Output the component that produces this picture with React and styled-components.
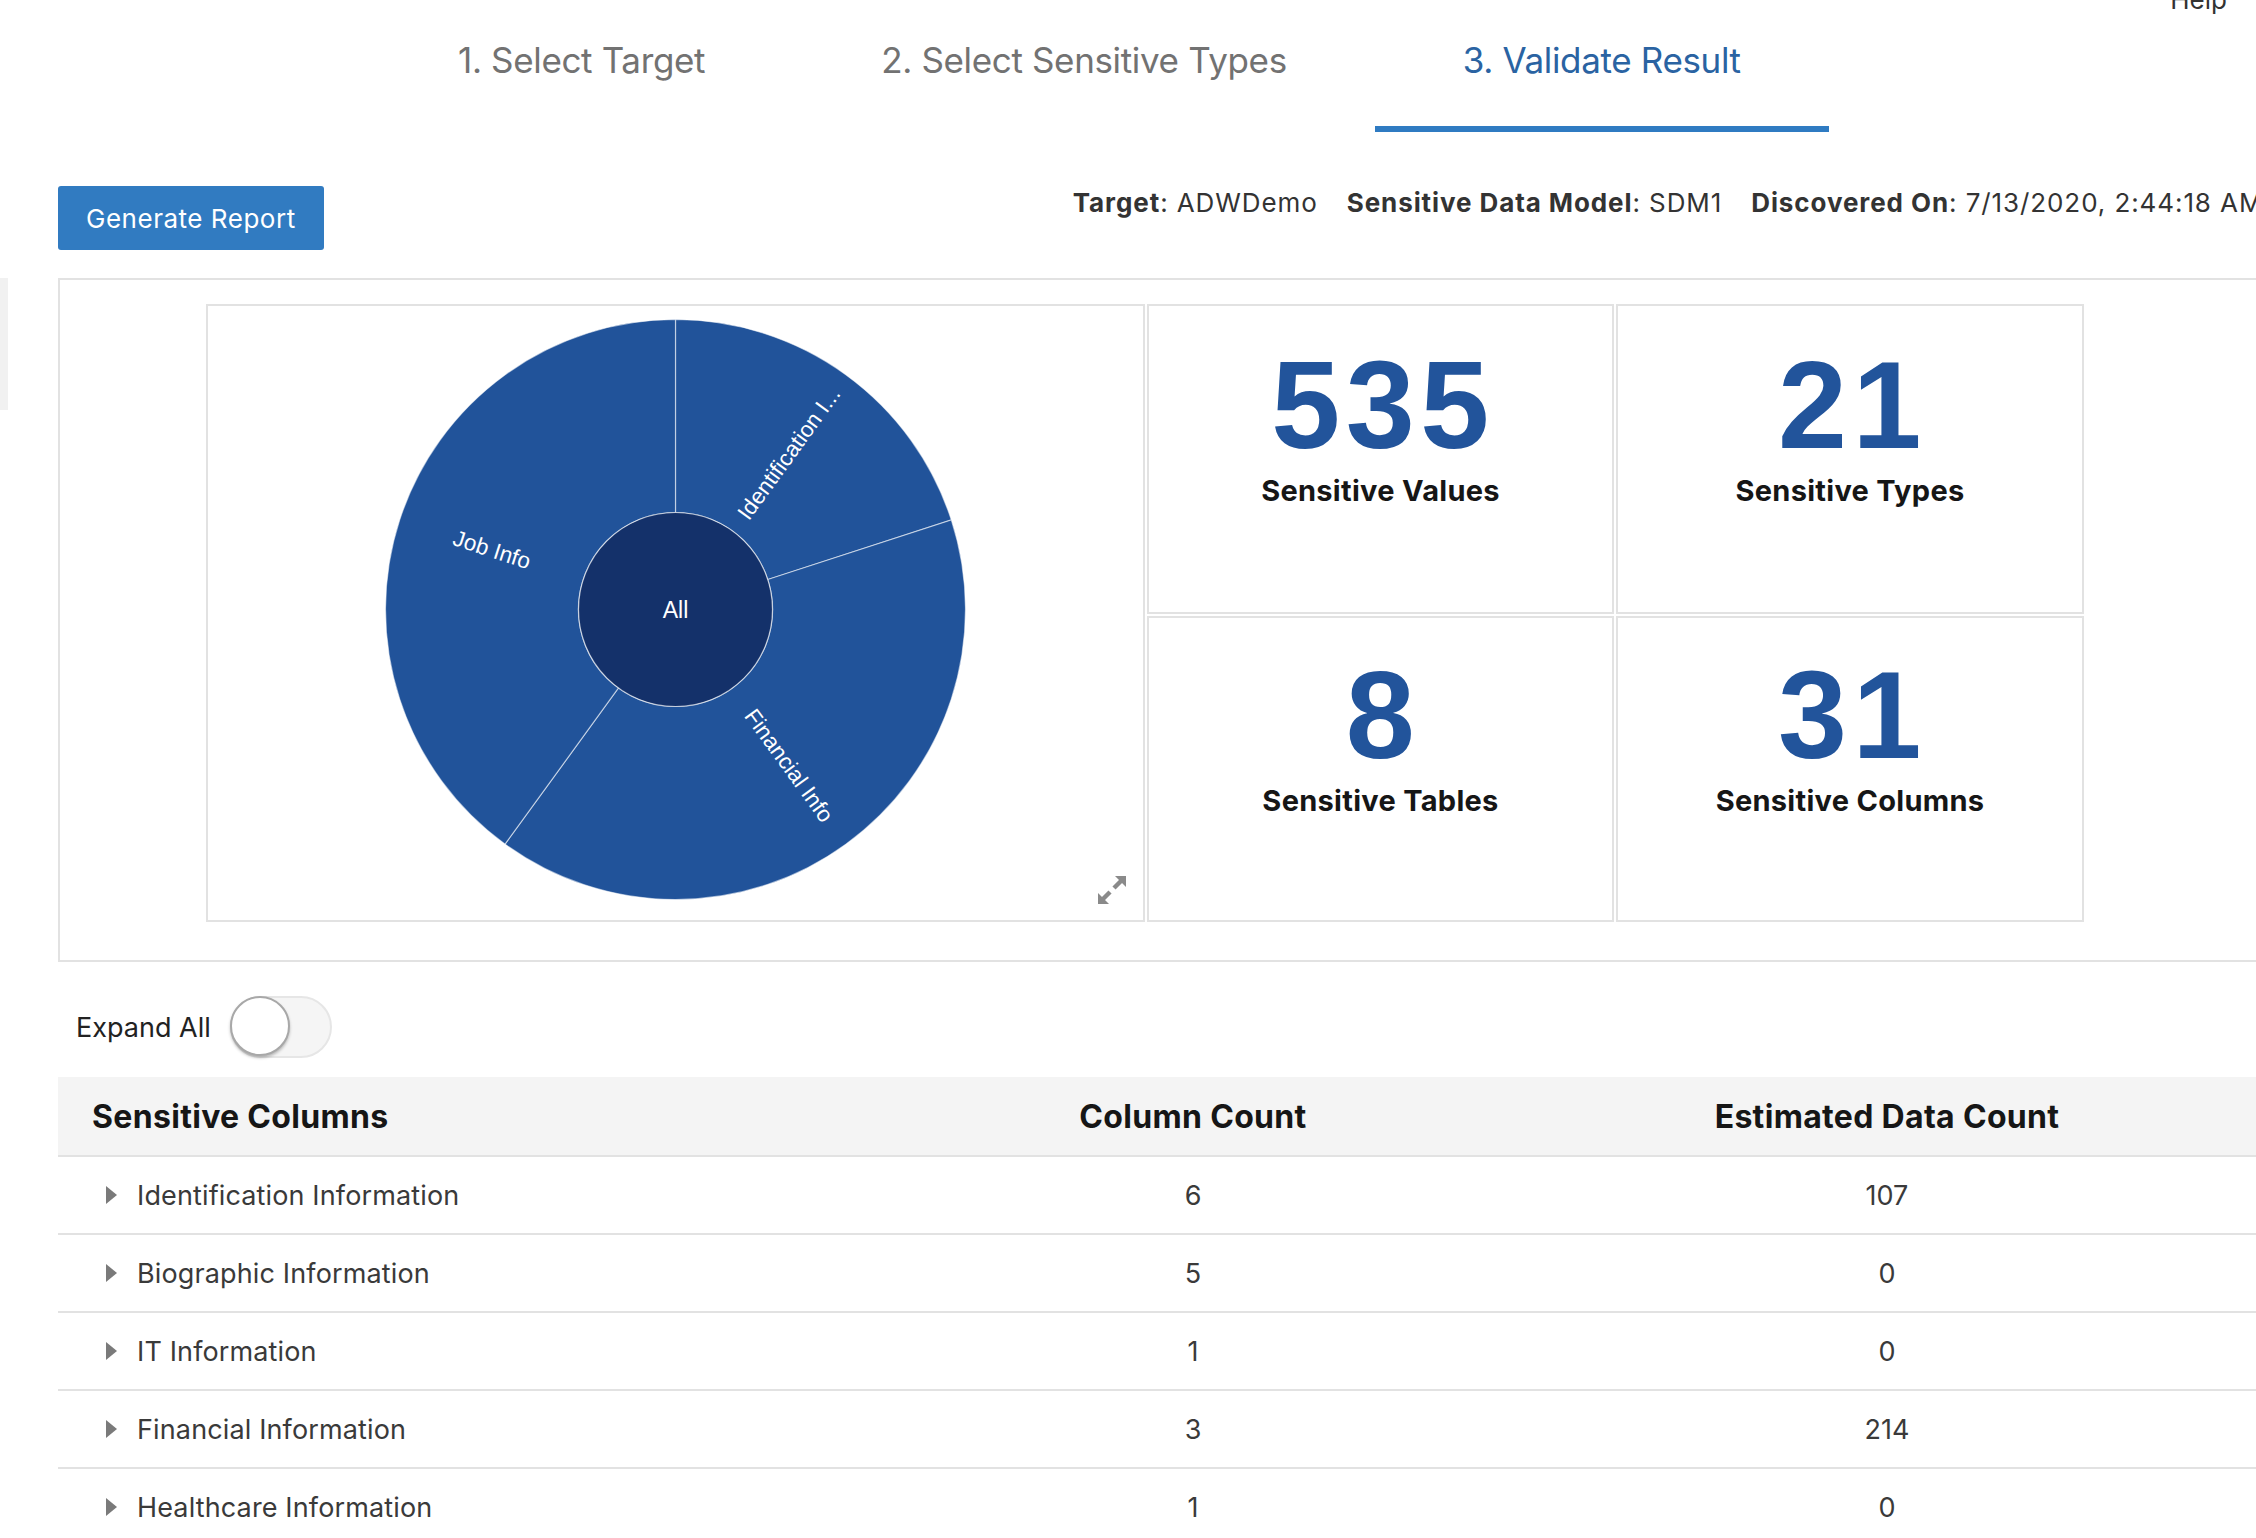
import React from "react";
import styled, { createGlobalStyle } from "styled-components";

const GlobalStyle = createGlobalStyle`
  html, body {
    margin: 0;
    padding: 0;
    overflow: hidden;
    background: #fff;
    font-family: Inter, "Noto Sans", sans-serif;
    color: #333;
  }
`;

const HelpBar = styled.div`
  display: flex;
  justify-content: flex-end;
  height: 20px;
  padding-right: 29px;
`;

const HelpLink = styled.a`
  font-size: 26px;
  line-height: 26px;
  margin-top: -13px;
  color: #333;
  text-decoration: none;
`;

const Body = styled.div`
  display: flex;
  align-items: flex-start;
`;

const SideTab = styled.div`
  flex-shrink: 0;
  width: 8px;
  height: 132px;
  margin-top: 258px;
  background: #f1f1f1;
`;

const Main = styled.main`
  flex-shrink: 0;
  width: 2260px;
  margin-left: 50px;
`;

const Steps = styled.nav`
  display: flex;
  margin-left: 312px;
`;

const Step = styled.a`
  padding: 19px 88px 45px;
  font-size: 35px;
  line-height: 42px;
  letter-spacing: -0.01em;
  color: ${(p) => (p.$active ? "#2a63a2" : "#727272")};
  border-bottom: 6px solid ${(p) => (p.$active ? "#2f7bc2" : "transparent")};
  text-decoration: none;
  white-space: nowrap;
`;

const ActionBar = styled.div`
  display: flex;
  align-items: flex-start;
  margin-top: 54px;
`;

const PrimaryButton = styled.button`
  height: 64px;
  padding: 0 28px;
  border: none;
  border-radius: 3px;
  background: #317bc1;
  color: #fff;
  font-family: Inter, sans-serif;
  font-size: 26px;
  letter-spacing: 0.02em;
  white-space: nowrap;
  cursor: pointer;
`;

const Meta = styled.div`
  display: flex;
  gap: 29px;
  margin-left: 749px;
  margin-top: 2px;
  font-size: 26px;
  line-height: 30px;
  letter-spacing: 0.035em;
  color: #333;
  white-space: nowrap;
`;

const MetaItem = styled.span`
  b {
    font-weight: 700;
  }
`;

const SummaryPanel = styled.section`
  margin-top: 28px;
  padding: 24px 0 38px 146px;
  border: 2px solid #e2e2e2;
  display: flex;
  gap: 2px;
`;

const ChartCard = styled.div`
  position: relative;
  width: 935px;
  height: 614px;
  border: 2px solid #e2e2e2;
`;

const ExpandButton = styled.button`
  position: absolute;
  right: 13px;
  bottom: 12px;
  width: 36px;
  height: 36px;
  padding: 0;
  border: none;
  background: none;
  cursor: pointer;
`;

const StatGrid = styled.div`
  display: grid;
  grid-template-columns: 467px 468px;
  grid-template-rows: 310px 306px;
  gap: 2px;
`;

const StatCard = styled.div`
  display: flex;
  flex-direction: column;
  align-items: center;
  padding-top: ${(p) => p.$top}px;
  border: 2px solid #e2e2e2;
`;

const StatValue = styled.div`
  padding-left: 0.04em;
  font-family: "Liberation Sans", Arial, sans-serif;
  font-weight: 700;
  font-size: 124px;
  line-height: 124px;
  letter-spacing: 0.045em;
  color: #22549b;
`;

const StatLabel = styled.div`
  margin-top: 6px;
  font-size: 29px;
  line-height: 36px;
  font-weight: 700;
  letter-spacing: 0.01em;
  color: #161616;
`;

const ExpandRow = styled.div`
  display: flex;
  align-items: center;
  gap: 19px;
  margin-top: 34px;
  padding-left: 18px;
`;

const ExpandLabel = styled.span`
  font-size: 27px;
  color: #222;
`;

const Switch = styled.button`
  position: relative;
  width: 102px;
  height: 62px;
  padding: 0;
  border: 2px solid #e6e6e6;
  border-radius: 31px;
  background: #f5f5f5;
  cursor: pointer;
`;

const Knob = styled.span`
  position: absolute;
  left: -2px;
  top: -2px;
  width: 60px;
  height: 60px;
  border-radius: 50%;
  background: #fff;
  border: 2px solid #a8a8a8;
  box-sizing: border-box;
  box-shadow: 0 2px 3px rgba(0, 0, 0, 0.25);
`;

const Table = styled.div`
  margin-top: 19px;
`;

const Row = styled.div`
  display: grid;
  grid-template-columns: 788px 694px 694px;
  align-items: center;
  height: ${(p) => (p.$head ? "78px" : "76px")};
  border-bottom: 2px solid #e2e2e2;
  background: ${(p) => (p.$head ? "#f4f4f4" : "#fff")};
`;

const HeadCell = styled.div`
  padding-left: ${(p) => (p.$first ? "34px" : "0")};
  text-align: ${(p) => (p.$first ? "left" : "center")};
  font-size: 32px;
  font-weight: 700;
  letter-spacing: 0.01em;
  color: #161616;
`;

const NameCell = styled.div`
  display: flex;
  align-items: center;
  gap: 20px;
  padding-left: 48px;
  font-size: 27px;
  letter-spacing: 0.005em;
  color: #3a3a3a;
`;

const Caret = styled.span`
  width: 0;
  height: 0;
  border-top: 9px solid transparent;
  border-bottom: 9px solid transparent;
  border-left: 11px solid #7a7a7a;
`;

const NumCell = styled.div`
  text-align: center;
  font-size: 27px;
  color: #3a3a3a;
`;

const cx = 467.5;
const cy = 303.5;
const R = 290;
const r = 97;

const pt = (deg, rad) => {
  const a = (deg * Math.PI) / 180;
  return [cx + rad * Math.sin(a), cy - rad * Math.cos(a)];
};

const slicePath = (a0, a1) => {
  const [x0, y0] = pt(a0, R);
  const [x1, y1] = pt(a1, R);
  const [x2, y2] = pt(a1, r);
  const [x3, y3] = pt(a0, r);
  const large = a1 - a0 > 180 ? 1 : 0;
  return `M${x0} ${y0} A${R} ${R} 0 ${large} 1 ${x1} ${y1} L${x2} ${y2} A${r} ${r} 0 ${large} 0 ${x3} ${y3} Z`;
};

const slices = [
  { label: "Identification I...", from: 0, to: 72 },
  { label: "Financial Info", from: 72, to: 216 },
  { label: "Job Info", from: 216, to: 360 },
];

const Sunburst = () => (
  <svg width="935" height="614" viewBox="0 0 935 614">
    {slices.map((s) => {
      const mid = (s.from + s.to) / 2;
      const [lx, ly] = pt(mid, 193);
      const rot = mid < 180 ? mid - 90 : mid - 270;
      return (
        <g key={s.label}>
          <path d={slicePath(s.from, s.to)} fill="#21539a" stroke="rgba(255,255,255,0.55)" strokeWidth="1.2" />
          <text
            x={lx}
            y={ly}
            transform={`rotate(${rot} ${lx} ${ly})`}
            textAnchor="middle"
            dominantBaseline="central"
            fill="#fff"
            fontFamily="'Liberation Sans', Arial, sans-serif"
            fontSize="22.5"
          >
            {s.label}
          </text>
        </g>
      );
    })}
    <circle cx={cx} cy={cy} r={r} fill="#14316a" stroke="rgba(255,255,255,0.6)" strokeWidth="1.2" />
    <text
      x={cx}
      y={cy}
      textAnchor="middle"
      dominantBaseline="central"
      fill="#fff"
      fontFamily="'Liberation Sans', Arial, sans-serif"
      fontSize="23"
    >
      All
    </text>
  </svg>
);

const ExpandIcon = () => (
  <svg width="36" height="36" viewBox="0 0 36 36">
    <g stroke="#8a8a8a" strokeWidth="4.5" fill="none" strokeLinecap="butt">
      <line x1="20" y1="16" x2="28" y2="8" />
      <line x1="16" y1="20" x2="8" y2="28" />
    </g>
    <polygon points="21,4 32,4 32,15" fill="#8a8a8a" />
    <polygon points="4,21 4,32 15,32" fill="#8a8a8a" />
  </svg>
);

const stats = [
  { value: "535", label: "Sensitive Values", top: 37 },
  { value: "21", label: "Sensitive Types", top: 37 },
  { value: "8", label: "Sensitive Tables", top: 35 },
  { value: "31", label: "Sensitive Columns", top: 35 },
];

const rows = [
  { name: "Identification Information", cols: 6, data: 107 },
  { name: "Biographic Information", cols: 5, data: 0 },
  { name: "IT Information", cols: 1, data: 0 },
  { name: "Financial Information", cols: 3, data: 214 },
  { name: "Healthcare Information", cols: 1, data: 0 },
];

export default function App() {
  return (
    <>
      <GlobalStyle />
      <HelpBar>
        <HelpLink href="#help">Help</HelpLink>
      </HelpBar>
      <Body>
        <SideTab />
        <Main>
          <Steps>
            <Step href="#target">1. Select Target</Step>
            <Step href="#types">2. Select Sensitive Types</Step>
            <Step href="#validate" $active>
              3. Validate Result
            </Step>
          </Steps>

          <ActionBar>
            <PrimaryButton>Generate Report</PrimaryButton>
            <Meta>
              <MetaItem>
                <b>Target</b>: ADWDemo
              </MetaItem>
              <MetaItem>
                <b>Sensitive Data Model</b>: SDM1
              </MetaItem>
              <MetaItem>
                <b>Discovered On</b>: 7/13/2020, 2:44:18 AM
              </MetaItem>
            </Meta>
          </ActionBar>

          <SummaryPanel>
            <ChartCard>
              <Sunburst />
              <ExpandButton aria-label="Expand">
                <ExpandIcon />
              </ExpandButton>
            </ChartCard>
            <StatGrid>
              {stats.map((s) => (
                <StatCard key={s.label} $top={s.top}>
                  <StatValue>{s.value}</StatValue>
                  <StatLabel>{s.label}</StatLabel>
                </StatCard>
              ))}
            </StatGrid>
          </SummaryPanel>

          <ExpandRow>
            <ExpandLabel>Expand All</ExpandLabel>
            <Switch aria-label="Expand All">
              <Knob />
            </Switch>
          </ExpandRow>

          <Table>
            <Row $head>
              <HeadCell $first>Sensitive Columns</HeadCell>
              <HeadCell>Column Count</HeadCell>
              <HeadCell>Estimated Data Count</HeadCell>
            </Row>
            {rows.map((row) => (
              <Row key={row.name}>
                <NameCell>
                  <Caret />
                  {row.name}
                </NameCell>
                <NumCell>{row.cols}</NumCell>
                <NumCell>{row.data}</NumCell>
              </Row>
            ))}
          </Table>
        </Main>
      </Body>
    </>
  );
}
